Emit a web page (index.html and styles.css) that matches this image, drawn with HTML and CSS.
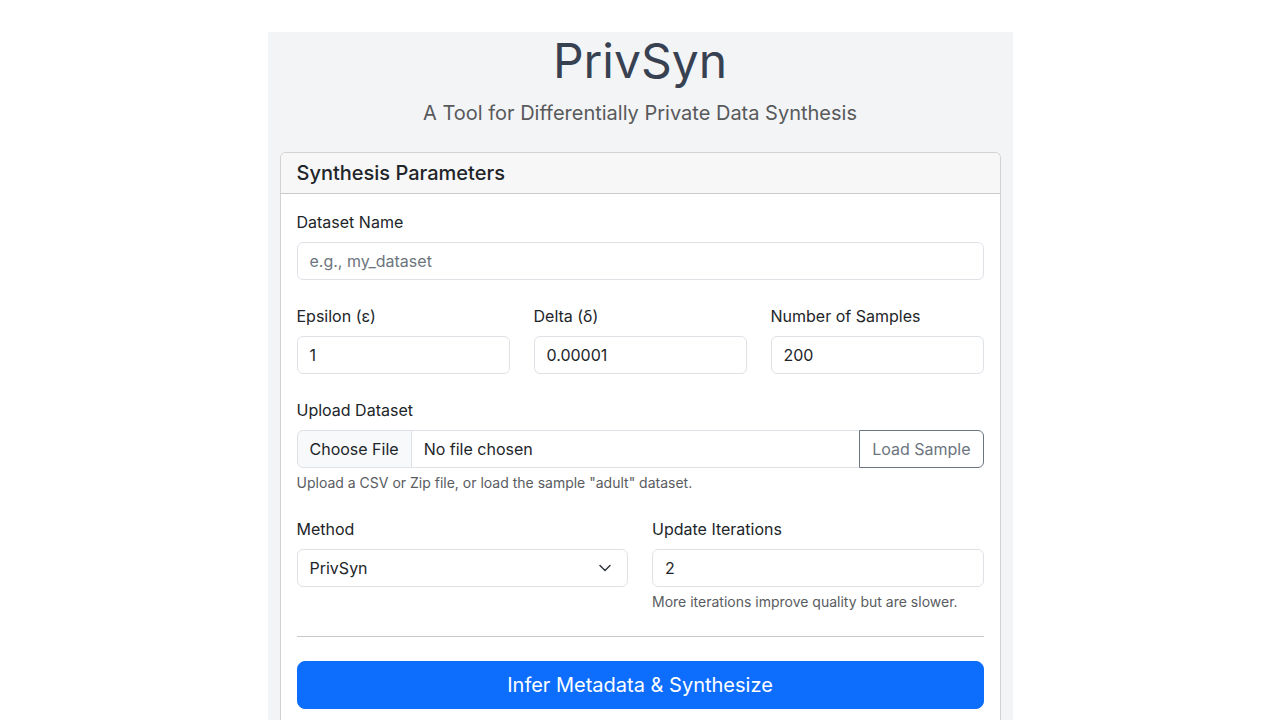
FILE: index.html
```html
<!DOCTYPE html>
<html lang="en">
<head>
<meta charset="utf-8">
<title>PrivSyn</title>
<link rel="stylesheet" href="styles.css">
</head>
<body>
<main class="page">
  <h1 class="title">PrivSyn</h1>
  <p class="lead">A Tool for Differentially Private Data Synthesis</p>
  <section class="card">
    <div class="card-header"><h5 class="card-title">Synthesis Parameters</h5></div>
    <div class="card-body">
      <div class="field mb-4">
        <label class="label">Dataset Name</label>
        <div class="input placeholder">e.g., my_dataset</div>
      </div>
      <div class="row row-3 mb-4">
        <div class="field">
          <label class="label">Epsilon (ε)</label>
          <div class="input">1</div>
        </div>
        <div class="field">
          <label class="label">Delta (δ)</label>
          <div class="input">0.00001</div>
        </div>
        <div class="field">
          <label class="label">Number of Samples</label>
          <div class="input">200</div>
        </div>
      </div>
      <div class="field mb-4">
        <label class="label">Upload Dataset</label>
        <div class="input-group">
          <span class="file-btn">Choose File</span>
          <span class="file-name">No file chosen</span>
          <span class="btn-outline">Load Sample</span>
        </div>
        <div class="form-text">Upload a CSV or Zip file, or load the sample "adult" dataset.</div>
      </div>
      <div class="row row-2">
        <div class="field">
          <label class="label">Method</label>
          <div class="input select">
            <span>PrivSyn</span>
            <svg class="chevron" width="12" height="8" viewBox="0 0 12 8"><path d="M1 1.5l5 5 5-5" fill="none" stroke="#343a40" stroke-width="1.5" stroke-linecap="round" stroke-linejoin="round"/></svg>
          </div>
        </div>
        <div class="field">
          <label class="label">Update Iterations</label>
          <div class="input">2</div>
          <div class="form-text">More iterations improve quality but are slower.</div>
        </div>
      </div>
      <hr class="divider">
      <div class="btn-primary">Infer Metadata &amp; Synthesize</div>
    </div>
  </section>
</main>
</body>
</html>
```
FILE: styles.css
```css
* { box-sizing: border-box; }
html, body { margin: 0; padding: 0; background: #fff; }
body {
  font-family: Inter, "Noto Sans", sans-serif;
  font-size: 16px;
  line-height: 1.5;
  color: #212529;
}
.page {
  width: 745px;
  margin: 32px auto 0;
  padding: 0 12px 40px;
  background: #f3f4f6;
}
.title {
  margin: 0 0 8px;
  font-size: 48px;
  font-weight: 400;
  line-height: 1.2;
  text-align: center;
  color: #374151;
}
.lead {
  margin: 0 0 24px;
  font-size: 20px;
  font-weight: 400;
  line-height: 30px;
  text-align: center;
  color: #58595b;
}
.card {
  background: #fff;
  border: 1px solid rgba(0,0,0,.175);
  border-radius: 6px;
  overflow: hidden;
}
.card-header {
  padding: 8px 16px;
  background: #f7f7f7;
  border-bottom: 1px solid rgba(0,0,0,.175);
}
.card-title {
  margin: 0;
  font-size: 20px;
  font-weight: 500;
  line-height: 24px;
}
.card-body { padding: 16px; }
.mb-4 { margin-bottom: 24px; }
.field { display: flex; flex-direction: column; min-width: 0; }
.label { display: block; margin-bottom: 8px; line-height: 24px; }
.input {
  height: 38px;
  padding: 6px 12px;
  border: 1px solid #dee2e6;
  border-radius: 6px;
  background: #fff;
  line-height: 24px;
  color: #212529;
}
.placeholder { color: #6c757d; }
.row { display: grid; gap: 24px; }
.row-3 { grid-template-columns: repeat(3, 1fr); }
.row-2 { grid-template-columns: repeat(2, 1fr); }
.select { display: flex; align-items: center; justify-content: space-between; padding-right: 16px; }
.chevron { width: 12px; height: 8px; }
.input-group {
  display: flex;
  height: 38px;
}
.file-btn {
  padding: 6px 12px;
  border: 1px solid #dee2e6;
  border-radius: 6px 0 0 6px;
  background: #f8f9fa;
  line-height: 24px;
}
.file-name {
  flex: 1;
  padding: 6px 12px;
  border-top: 1px solid #dee2e6;
  border-bottom: 1px solid #dee2e6;
  line-height: 24px;
}
.btn-outline {
  padding: 6px 12px;
  border: 1px solid #6c757d;
  border-radius: 0 6px 6px 0;
  color: #6c757d;
  line-height: 24px;
}
.form-text {
  margin-top: 4px;
  font-size: 14px;
  line-height: 21px;
  color: #595c5f;
}
.divider {
  margin: 24px 0;
  border: 0;
  border-top: 1px solid #c7c8c9;
  height: 0;
}
.btn-primary {
  height: 48px;
  padding: 8px 16px;
  border: 1px solid #0d6efd;
  border-radius: 8px;
  background: #0d6efd;
  color: #fff;
  font-size: 20px;
  line-height: 30px;
  text-align: center;
}
```
